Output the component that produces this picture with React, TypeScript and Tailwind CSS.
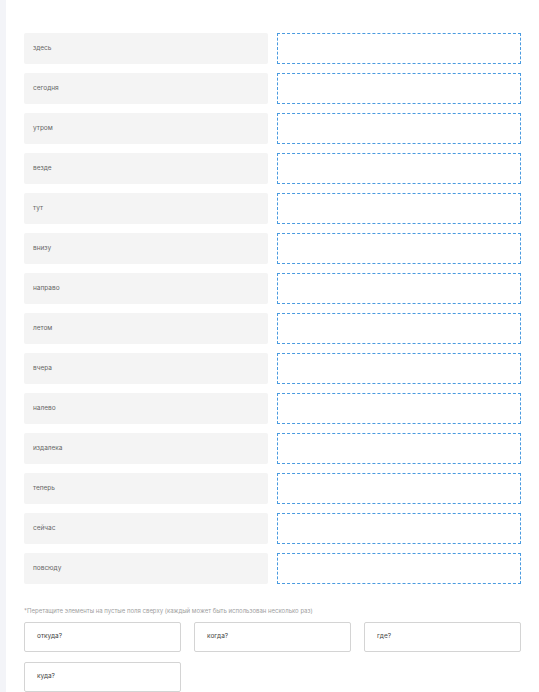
const words = [
  "здесь",
  "сегодня",
  "утром",
  "везде",
  "тут",
  "внизу",
  "направо",
  "летом",
  "вчера",
  "налево",
  "издалека",
  "теперь",
  "сейчас",
  "повсюду",
];

const options = ["откуда?", "когда?", "где?", "куда?"];

export default function App() {
  return (
    <div className="min-h-screen flex bg-white font-['Inter',sans-serif]">
      {/* thin side rail */}
      <div className="w-[6px] shrink-0 bg-[#f3f4f8]" />

      <div className="flex-1 pl-[18px] pt-[33px] pr-[18px]">
        <div className="w-[497px] flex flex-col gap-[9px]">
          {words.map((word) => (
            <div key={word} className="grid grid-cols-2 gap-x-[9px] h-[31px]">
              <div className="bg-[#f4f4f4] rounded-[2px] flex items-center pl-[9px] text-[6.5px] text-[#666]">
                {word}
              </div>
              <div className="border border-dashed border-[#4a9be0]" />
            </div>
          ))}
        </div>

        <p className="mt-[24px] text-[6px] text-[#a0a0a0] leading-none">
          *Перетащите элементы на пустые поля сверху (каждый может быть использован несколько раз)
        </p>

        <div className="mt-[8px] w-[497px] grid grid-cols-3 gap-x-[13px] gap-y-[10px]">
          {options.map((opt) => (
            <div
              key={opt}
              className="h-[30px] border border-[#d4d4d4] rounded-[2px] bg-white flex items-center pl-[12px] text-[6.5px] text-[#444]"
            >
              {opt}
            </div>
          ))}
        </div>
      </div>
    </div>
  );
}
